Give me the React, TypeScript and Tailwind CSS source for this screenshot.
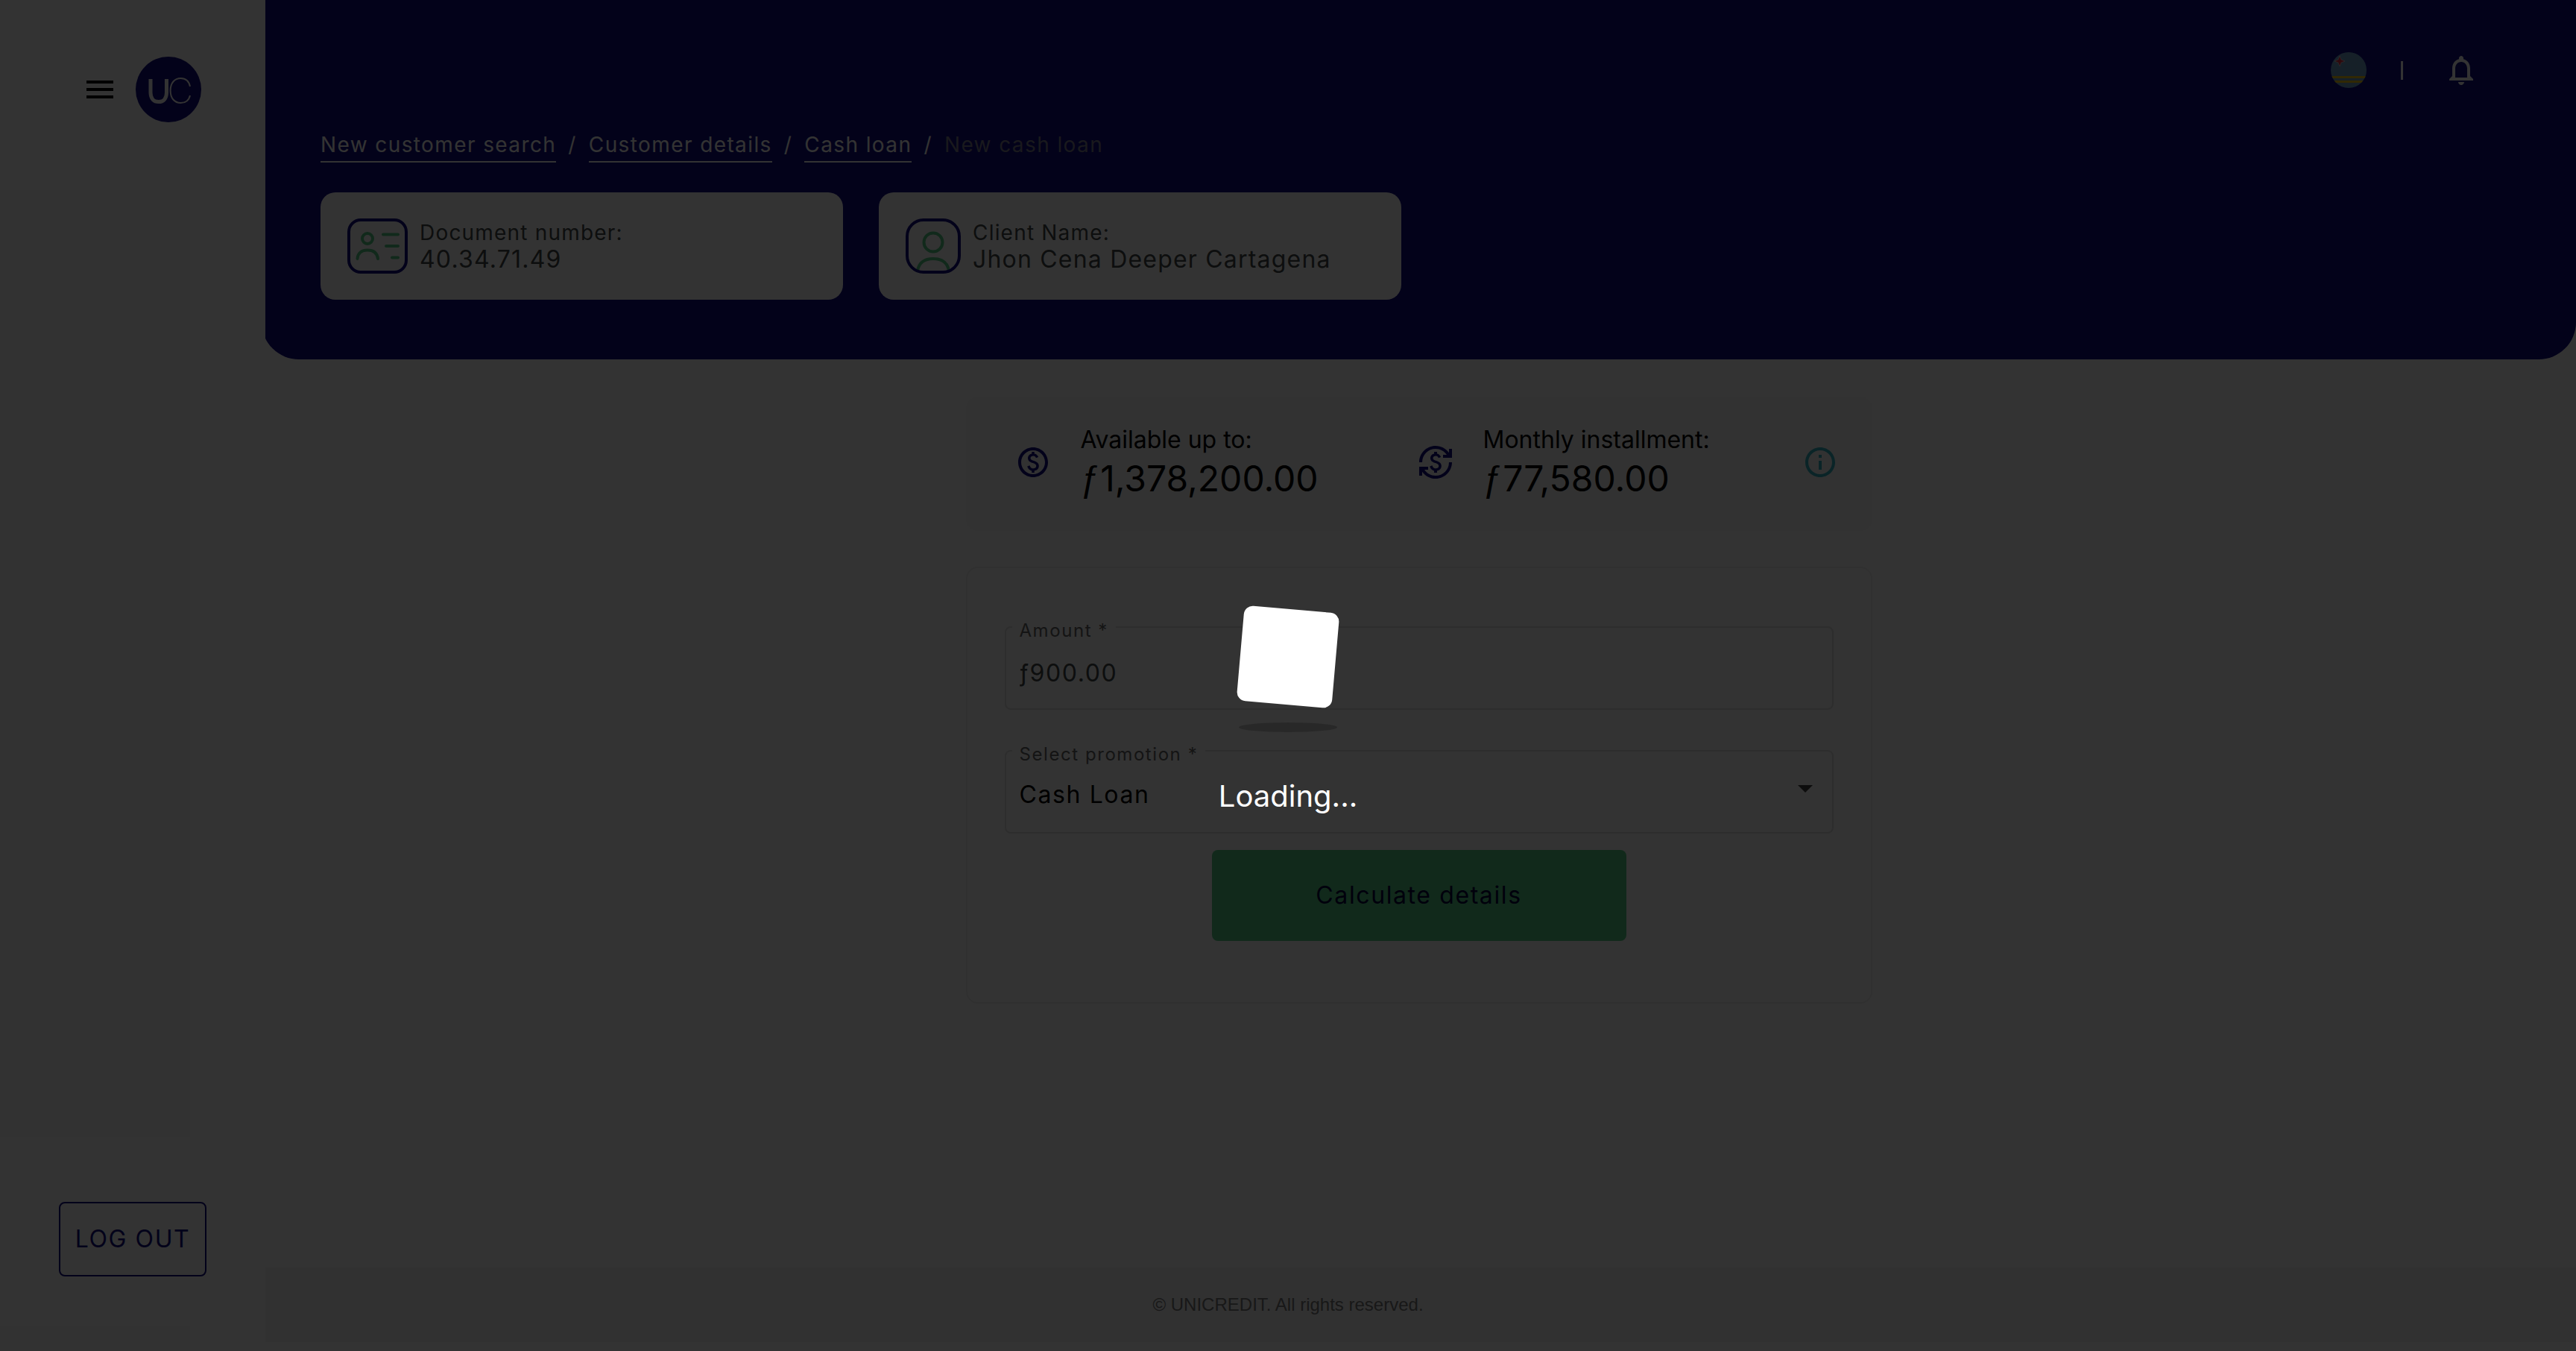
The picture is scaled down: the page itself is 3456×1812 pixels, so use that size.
import React from "react";
import { MdCurrencyExchange, MdOutlinePaid } from "react-icons/md";

const NAVY = "#0f0a80";

function MenuIcon() {
  return (
    <svg className="size-12" viewBox="0 0 24 24" fill="#000">
      <path d="M3 18h18v-2H3v2zm0-5h18v-2H3v2zm0-7v2h18V6H3z" />
    </svg>
  );
}

function Logo() {
  return (
    <svg className="size-[88px]" viewBox="0 0 88 88" fill="none" aria-label="UC" role="img">
      <circle cx="44" cy="44" r="44" fill={NAVY} />
      <path d="M20 30v18c0 8.500 4.500 12.500 10.800 12.500S41.500 56.500 41.500 48V30" stroke="#fff" strokeWidth="5" />
      <path d="M73 40C71.500 33 67 29 60.500 29 52 29 46.600 35.500 46.600 45.500S52 62 60.500 62C67 62 71.500 58.500 73 52" stroke="#fff" strokeWidth="2" />
    </svg>
  );
}

function FlagIcon() {
  return (
    <svg className="size-12" viewBox="0 0 48 48" aria-label="Aruba" role="img">
      <clipPath id="flag">
        <circle cx="24" cy="24" r="24" />
      </clipPath>
      <g clipPath="url(#flag)">
        <path fill="#6ea0c8" d="M0 0h48v48H0z" />
        <path fill="#f5c814" d="M0 32h48v3H0zM0 38h48v3H0z" />
        <path fill="#e63246" stroke="#fff" strokeWidth="0.5" d="M12 5l2 5 5 2-5 2-2 5-2-5-5-2 5-2z" />
      </g>
    </svg>
  );
}

function BellIcon() {
  return (
    <svg className="size-12" viewBox="0 0 24 24" fill="#fff">
      <path d="M12 22c1.100 0 2-.9 2-2h-4c0 1.100.9 2 2 2zm6-6v-5c0-3.070-1.630-5.640-4.500-6.320V4c0-.83-.67-1.500-1.500-1.500s-1.500.67-1.500 1.500v.68C7.640 5.360 6 7.920 6 11v5l-2 2v1h16v-1l-2-2zm-2 1H8v-6c0-2.480 1.510-4.500 4-4.500s4 2.020 4 4.500v6z" />
    </svg>
  );
}

function IdCardIcon() {
  return (
    <svg className="h-[74px] w-[81px] shrink-0" viewBox="0 0 81 74" fill="none" strokeWidth="4" strokeLinecap="round">
      <rect x="2" y="2" width="77" height="70" rx="16" stroke={NAVY} />
      <g stroke="#55cd87">
        <circle cx="27" cy="27" r="7" />
        <path d="M13.500 54C14 46 19.500 42.500 27 42.500S40 46 41 54M48 21.500h20M52 37h16M60 52.500h8" />
      </g>
    </svg>
  );
}

function PersonIcon() {
  return (
    <svg className="size-[74px] shrink-0" viewBox="0 0 74 74" fill="none" strokeWidth="4">
      <g stroke="#55cd87">
        <circle cx="37" cy="32" r="12.500" />
        <path d="M16 70C18 59 26 54 37 54S56 59 58 70" />
      </g>
      <rect x="2" y="2" width="70" height="70" rx="22" stroke={NAVY} />
    </svg>
  );
}

function InfoIcon() {
  return (
    <svg className="size-12" viewBox="0 0 24 24" fill="#35b4c4">
      <path d="M11 7h2v2h-2zm0 4h2v6h-2zm1-9C6.480 2 2 6.480 2 12s4.480 10 10 10 10-4.480 10-10S17.520 2 12 2zm0 18c-4.410 0-8-3.590-8-8s3.590-8 8-8 8 3.590 8 8-3.590 8-8 8z" />
    </svg>
  );
}

function InfoCard({ icon, label, value }: { icon: React.ReactNode; label: string; value: string }) {
  return (
    <div className="flex h-36 w-[701px] items-center gap-4 rounded-[20px] bg-white px-9 tracking-[0.075em] text-[#414848]">
      {icon}
      <div>
        <p className="text-[28px] leading-9">{label}</p>
        <p className="text-[32px] leading-9">{value}</p>
      </div>
    </div>
  );
}

function Figure({ icon, label, value }: { icon: React.ReactNode; label: string; value: string }) {
  return (
    <div className="flex items-center gap-10">
      {icon}
      <div className="pb-1">
        <p className="text-[32px] leading-[48px]">{label}</p>
        <p className="text-5xl leading-[56px]">
          <span className="font-['Liberation_Sans',sans-serif]">ƒ</span>
          {value}
        </p>
      </div>
    </div>
  );
}

const crumbs = ["New customer search", "Customer details", "Cash loan"];

export default function App() {
  return (
    <div className="relative flex min-h-screen flex-col bg-white font-['Inter','Noto_Sans',sans-serif] text-black">
      <div className="flex grow">
        <aside className="relative z-10 flex w-[356px] shrink-0 flex-col items-center justify-between bg-[#fcfcfc] pt-[76px] pb-[100px]">
          <div className="flex items-center gap-6 pl-6">
            <button aria-label="Menu">
              <MenuIcon />
            </button>
            <Logo />
          </div>
          <button className="h-[100px] w-[198px] rounded-lg border-2 border-[#0f0a80] text-[32px] tracking-wider text-[#0f0a80]">
            LOG OUT
          </button>
        </aside>

        <div className="-ml-[5px] flex grow flex-col">
          <header className="flex h-[482px] flex-col rounded-b-[50px] bg-[#0f0a80] pt-[70px] pr-[74px] pl-[79px]">
            <div className="flex items-center justify-end gap-[46px] pr-14">
              <FlagIcon />
              <span className="h-[25px] w-[3px] bg-white" />
              <button aria-label="Notifications" className="ml-2">
                <BellIcon />
              </button>
            </div>
            <nav aria-label="Breadcrumb" className="mt-[58px] flex text-[28px] leading-9 tracking-wider text-white">
              {crumbs.map((c) => (
                <React.Fragment key={c}>
                  <a href="#" className="border-b-2 border-white pb-1">{c}</a>
                  <span className="px-4">/</span>
                </React.Fragment>
              ))}
              <span className="text-[#7c7c90]">New cash loan</span>
            </nav>
            <div className="mt-10 flex gap-12">
              <InfoCard icon={<IdCardIcon />} label="Document number:" value="40.34.71.49" />
              <InfoCard icon={<PersonIcon />} label="Client Name:" value="Jhon Cena Deeper Cartagena" />
            </div>
          </header>

          <main className="mx-auto mt-[50px] flex w-[1216px] flex-col gap-12">
            <section className="grid h-[180px] grid-cols-[540px_1fr_auto] items-center rounded-2xl bg-[#f8f8f8] pr-[46px] pb-1 pl-[66px]">
              <Figure icon={<MdOutlinePaid className="size-12 shrink-0 text-[#0f0a80]" />} label="Available up to:" value="1,378,200.00" />
              <Figure icon={<MdCurrencyExchange className="size-12 shrink-0 text-[#0f0a80]" />} label="Monthly installment:" value="77,580.00" />
              <button aria-label="Information">
                <InfoIcon />
              </button>
            </section>

            <form className="flex flex-col items-center rounded-2xl border-2 border-[#f0f0f0] px-[50px] pt-[78px] pb-[82px] tracking-wider">
              <div className="relative w-full">
                <label htmlFor="amount" className="absolute -top-3 left-2.5 bg-white px-2.5 text-2xl leading-9 tracking-[0.065em] text-[#666]">
                  Amount *
                </label>
                <input id="amount" defaultValue="ƒ900.00" className="h-28 w-full rounded-lg border-2 border-[#e0e0e0] px-[18px] pt-3 text-[32px] tracking-wider text-[#414848]" />
              </div>
              <div className="relative mt-[54px] w-full">
                <label htmlFor="promotion" className="absolute -top-3 left-2.5 bg-white px-2.5 text-2xl leading-9 tracking-[0.065em] text-[#666]">
                  Select promotion *
                </label>
                <select id="promotion" className="h-28 w-full appearance-none rounded-lg border-2 border-[#e0e0e0] px-[18px] pt-2 text-[32px] tracking-wider text-black">
                  <option>Cash Loan</option>
                </select>
                <svg className="pointer-events-none absolute top-[47px] right-7 h-2.5 w-5" viewBox="0 0 20 10" fill="#404040">
                  <path d="M0 0h20L10 10z" />
                </svg>
              </div>
              <button type="button" className="mt-[22px] h-[122px] w-1/2 rounded-lg bg-[#55cd87] text-[32px] tracking-wider text-[#05033c]">
                Calculate details
              </button>
            </form>
          </main>
        </div>
      </div>

      <footer className="absolute inset-x-0 bottom-3 flex h-[100px]">
        <div className="w-[356px] shrink-0" />
        <div className="grow bg-[#f5f5f5]" />
        <p className="absolute inset-x-0 top-0 text-center font-['Liberation_Sans',sans-serif] text-2xl leading-[100px] text-[#777]">
          © UNICREDIT. All rights reserved.
        </p>
      </footer>

      <div role="status" className="absolute inset-0 z-20 flex flex-col items-center bg-black/80 pt-[817px]">
        <div className="size-32 rotate-[5deg] rounded-xl bg-white" />
        <div className="mt-6 h-[13px] w-[132px] rounded-[50%] bg-black/20" />
        <p className="mt-[60px] text-[40px] leading-[52px] text-white">Loading...</p>
      </div>
    </div>
  );
}
